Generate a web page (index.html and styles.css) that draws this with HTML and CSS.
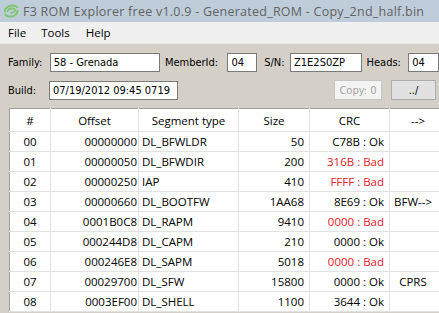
FILE: index.html
```html
<!DOCTYPE html>
<html>
<head>
  <title>F3 ROM Explorer free v1.0.9</title>
  <link rel="stylesheet" href="styles.css">
</head>
<body>
  <div class="titlebar">
    <svg class="logo" width="16" height="16" viewBox="0 0 16 16">
      <path d="M2 9.5 C1 6 4 3 8.5 2.5 C12 2.2 14.5 3.5 14.5 5" fill="none" stroke="#7fc66f" stroke-width="2"/>
      <path d="M4.5 9 C4.5 6.5 7 5.5 9.5 5.5 C11.5 5.5 12.5 6.5 12 8 C11.5 9.5 9 10 7.5 9.5" fill="none" stroke="#7fc66f" stroke-width="1.8"/>
      <path d="M14.5 7 C15 11 11.5 13.5 7.5 13.5 C4.5 13.5 2.5 12.5 2 11" fill="none" stroke="#7fc66f" stroke-width="2"/>
    </svg>
    <span class="title">F3 ROM Explorer free v1.0.9 - Generated_ROM - Copy_2nd_half.bin</span>
  </div>

  <div class="menubar">
    <span class="menu-file">File</span>
    <span class="menu-tools">Tools</span>
    <span class="menu-help">Help</span>
  </div>

  <div class="panel">
    <div class="fields">
      <label class="lbl lbl-first">Family:</label>
      <div class="box box-family">58 - Grenada</div>
      <label class="lbl lbl-member">MemberId:</label>
      <div class="box box-member">04</div>
      <label class="lbl lbl-sn">S/N:</label>
      <div class="box box-sn">Z1E2S0ZP</div>
      <label class="lbl lbl-heads">Heads:</label>
      <div class="box box-heads">04</div>
    </div>

    <div class="fields fields-build">
      <label class="lbl lbl-first">Build:</label>
      <div class="box box-build">07/19/2012 09:45 0719</div>
      <button class="btn btn-copy" disabled>Copy: 0</button>
      <button class="btn btn-up">../</button>
    </div>

    <table class="grid">
      <colgroup>
        <col class="c-num"><col class="c-off"><col class="c-seg"><col class="c-size"><col class="c-crc"><col class="c-link">
      </colgroup>
      <thead>
        <tr><th>#</th><th>Offset</th><th>Segment type</th><th>Size</th><th>CRC</th><th>--&gt;</th></tr>
      </thead>
      <tbody>
        <tr><td class="num">00</td><td class="off">00000000</td><td class="seg">DL_BFWLDR</td><td class="size">50</td><td class="crc">C78B : Ok</td><td class="link"></td></tr>
        <tr><td class="num">01</td><td class="off">00000050</td><td class="seg">DL_BFWDIR</td><td class="size">200</td><td class="crc bad">316B : Bad</td><td class="link"></td></tr>
        <tr><td class="num">02</td><td class="off">00000250</td><td class="seg">IAP</td><td class="size">410</td><td class="crc bad">FFFF : Bad</td><td class="link"></td></tr>
        <tr><td class="num">03</td><td class="off">00000660</td><td class="seg">DL_BOOTFW</td><td class="size">1AA68</td><td class="crc">8E69 : Ok</td><td class="link">BFW--&gt;</td></tr>
        <tr><td class="num">04</td><td class="off">0001B0C8</td><td class="seg">DL_RAPM</td><td class="size">9410</td><td class="crc bad">0000 : Bad</td><td class="link"></td></tr>
        <tr><td class="num">05</td><td class="off">000244D8</td><td class="seg">DL_CAPM</td><td class="size">210</td><td class="crc">0000 : Ok</td><td class="link"></td></tr>
        <tr><td class="num">06</td><td class="off">000246E8</td><td class="seg">DL_SAPM</td><td class="size">5018</td><td class="crc bad">0000 : Bad</td><td class="link"></td></tr>
        <tr><td class="num">07</td><td class="off">00029700</td><td class="seg">DL_SFW</td><td class="size">15800</td><td class="crc">0000 : Ok</td><td class="link">CPRS</td></tr>
        <tr><td class="num">08</td><td class="off">0003EF00</td><td class="seg">DL_SHELL</td><td class="size">1100</td><td class="crc">3644 : Ok</td><td class="link"></td></tr>
      </tbody>
    </table>
  </div>
</body>
</html>
```

FILE: styles.css
```css
body {
  margin: 0;
  width: 439px;
  height: 313px;
  overflow: hidden;
  background: #d4d0c8;
  font-family: "Open Sans", "Liberation Sans", sans-serif;
}

/* barra de titulo */
.titlebar {
  height: 22px;
  background: #bfcddb;
  display: flex;
  align-items: center;
}
.logo {
  margin-left: 3px;
  margin-right: 4px;
}
.title {
  font-size: 12.5px;
  color: #626262;
  white-space: nowrap;
  letter-spacing: 0.25px;
}

/* menu */
.menubar {
  height: 21px;
  background: #f0f0f0;
  border-bottom: 1px solid #e6e4e0;
  display: flex;
  align-items: center;
  font-size: 11.5px;
  color: #000;
}
.menu-file { margin-left: 8px; }
.menu-tools { margin-left: 15px; }
.menu-help { margin-left: 16px; }

/* panel principal */
.panel {
  padding-top: 9px;
  font-family: "DejaVu Sans Condensed", "DejaVu Sans", sans-serif;
  font-size: 11px;
}
.fields {
  display: flex;
  align-items: center;
  height: 19px;
}
.fields-build {
  margin-top: 8px;
  height: 20px;
}
.lbl {
  color: #000;
}
.lbl-first {
  width: 42px;
  margin-left: 8px;
}
.lbl-member { margin-left: 5px; width: 63px; }
.lbl-sn { margin-left: 7px; width: 26px; }
.lbl-heads { margin-left: 5px; width: 42px; }
.box {
  height: 17px;
  line-height: 17px;
  background: #fff;
  border: 1px solid #7a7a7a;
  padding-left: 3px;
  box-sizing: content-box;
  white-space: nowrap;
}
.box-family { width: 106px; }
.box-member { width: 25px; }
.box-sn { width: 67px; }
.box-heads { width: 26px; }
.box-build { width: 124px; margin-left: -1px; }

.btn {
  height: 20px;
  font-family: "DejaVu Sans Condensed", "DejaVu Sans", sans-serif;
  font-size: 11px;
  padding: 0;
  border-radius: 0;
}
.btn-copy {
  margin-left: 156px;
  width: 48px;
  background: #f4f4f4;
  border: 1px solid #c6c6c6;
  color: #a3a3a3;
}
.btn-up {
  margin-left: 9px;
  width: 45px;
  background: #e1e1e1;
  border: 1px solid #adadad;
  color: #000;
}

/* tabla de segmentos */
.grid {
  margin-top: 8px;
  margin-left: 9px;
  border-collapse: collapse;
  table-layout: fixed;
  width: 437px;
  background: #fff;
  border-top: 1px solid #a0a0a0;
  border-left: 1px solid #a0a0a0;
  font-family: "Open Sans", "Liberation Sans", sans-serif;
  font-size: 11.5px;
  color: #000;
}
.c-num { width: 41px; }
.c-off { width: 88px; }
.c-seg { width: 100px; }
.c-size { width: 71px; }
.c-crc { width: 80px; }
.c-link { width: 57px; }
.grid th, .grid td {
  border: 1px solid #e2e2e2;
  padding: 0;
  white-space: nowrap;
  overflow: hidden;
}
.grid th {
  height: 22px;
  font-weight: normal;
  text-align: center;
  border-top: none;
}
.grid td {
  height: 19px;
}
.grid th:first-child, .grid td:first-child {
  border-left: none;
}
.num { text-align: center; }
.off { text-align: right; padding-right: 1px !important; }
.seg { padding-left: 3px !important; }
.size { text-align: right; padding-right: 5px !important; }
.crc { text-align: right; padding-right: 5px !important; }
.link { text-align: center; padding-right: 10px !important; }
.bad { color: #e3202d; }
```
